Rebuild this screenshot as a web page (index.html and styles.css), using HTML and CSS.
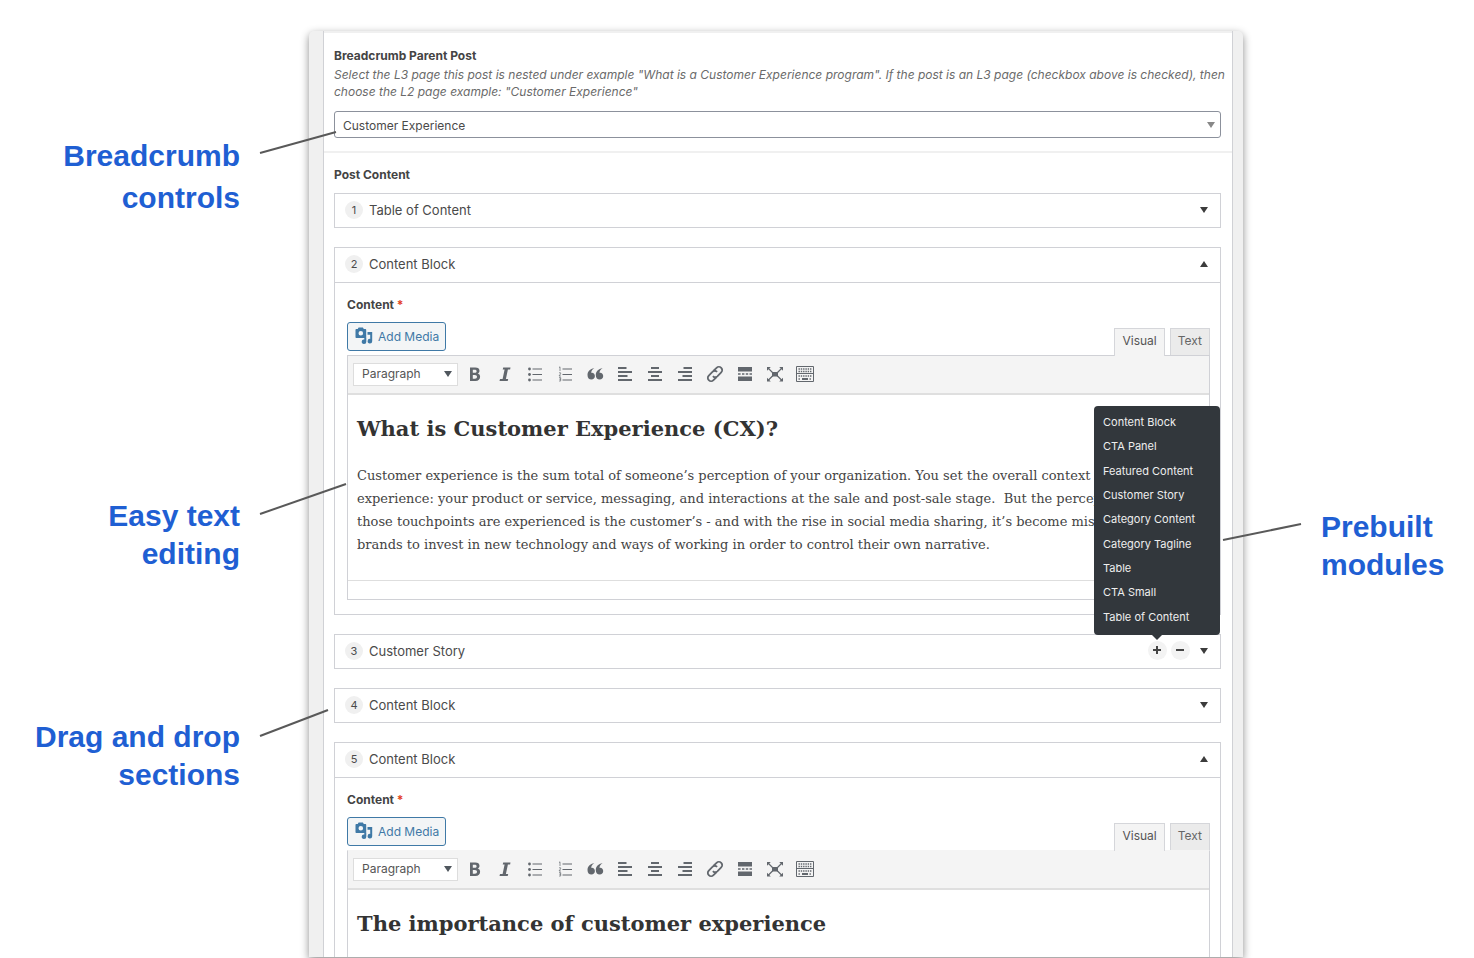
FILE: index.html
```
<!DOCTYPE html>
<html lang="en">

<head>
  <meta charset="UTF-8">
  <title>Post Content</title>
  <link rel="stylesheet" href="styles.css">
</head>

<body>
  <!-- shared icons -->
  <svg class="sprite" width="0" height="0" aria-hidden="true">
    <symbol id="i-media" viewBox="0 0 18 18">
      <path fill-rule="evenodd" d="M1.500 2h1.200L3.600.5h4.300L8.800 2h1.400c.6 0 1 .4 1 1V10c0 .6-.4 1-1 1H1.500c-.6 0-1-.4-1-1V3c0-.6.4-1 1-1zM5.800 4a2.300 2.300 0 1 0 0 4.600 2.300 2.300 0 0 0 0-4.600z" />
      <path d="M12.500 5H17.200v9.200a2.300 2.300 0 1 1-2-2.300V7.700h-2.700zM9.300 10.500h2v4.200a2.300 2.300 0 1 1-2-2.200z" />
    </symbol>
    <symbol id="i-bold" viewBox="0 0 20 20">
      <path fill-rule="evenodd" d="M5 3.500h5.200c2.900 0 4.300 1.200 4.300 3.300 0 1.300-.7 2.400-1.900 2.800 1.500.3 2.500 1.500 2.500 3.200 0 2.600-1.700 4.200-4.700 4.200H5zm2.800 2.200v3h1.900c1.200 0 1.900-.5 1.900-1.500s-.7-1.500-1.900-1.500zm0 5.200v3.800h2.100c1.400 0 2.100-.7 2.100-1.900s-.8-1.900-2.100-1.900z" />
    </symbol>
    <symbol id="i-italic" viewBox="0 0 20 20">
      <path d="M8.200 3.500h7.300l-.4 2.100h-2.200l-2 9.300h2.300l-.5 2.100H4.500l.5-2.100h2.600l2-9.300H7.700z" />
    </symbol>
    <symbol id="i-ul" viewBox="0 0 20 20">
      <path d="M7.500 4.500H17v1.100H7.500zM7.500 10H17v1.100H7.500zM7.500 15.500H17v1.100H7.500z" />
      <circle cx="4.500" cy="5" r="1.400" /><circle cx="4.500" cy="10.500" r="1.400" /><circle cx="4.500" cy="16" r="1.400" />
    </symbol>
    <symbol id="i-ol" viewBox="0 0 20 20">
      <path d="M7.500 4.500H17v1.100H7.500zM7.500 10H17v1.100H7.500zM7.500 15.500H17v1.100H7.500z" />
      <path class="thin" d="M4 3.600l1-.8V7M4 8.800h1.600v1L4 12h2M4 13.600h1.700v1.600H4.600h1.100V17H4" />
    </symbol>
    <symbol id="i-quote" viewBox="0 0 20 20">
      <path d="M9.300 4.200C6.900 5.600 6.200 7.300 6.200 8.800c2-.5 3.700 1 3.700 3.200 0 2-1.500 3.600-3.500 3.600-2.300 0-3.900-1.900-3.900-4.700 0-3.400 2.500-6.300 6.800-6.700zM17.600 4.200c-2.400 1.400-3.100 3.100-3.100 4.600 2-.5 3.700 1 3.700 3.200 0 2-1.500 3.600-3.500 3.600-2.300 0-3.900-1.900-3.900-4.700 0-3.400 2.500-6.300 6.800-6.700z" />
    </symbol>
    <symbol id="i-left" viewBox="0 0 20 20">
      <path d="M3 3h8.500v2H3zM3 7h14v2H3zM3 11h9.500v2H3zM3 15h14v2H3z" />
    </symbol>
    <symbol id="i-center" viewBox="0 0 20 20">
      <path d="M6 3h8v2H6zM3 7h14v2H3zM6 11h8v2H6zM3 15h14v2H3z" />
    </symbol>
    <symbol id="i-right" viewBox="0 0 20 20">
      <path d="M8.500 3H17v2H8.500zM3 7h14v2H3zM7.500 11H17v2H7.500zM3 15h14v2H3z" />
    </symbol>
    <symbol id="i-link" viewBox="0 0 20 20">
      <g class="line" transform="rotate(-45 10 10)">
        <path d="M9 13.300H4.500a3.300 3.300 0 0 1 0-6.600h5.500a3.200 3.200 0 0 1 3 3.300" />
        <path d="M11 6.700h4.500a3.300 3.300 0 0 1 0 6.600H10a3.200 3.200 0 0 1-3-3.300" />
      </g>
    </symbol>
    <symbol id="i-more" viewBox="0 0 20 20">
      <path d="M3 3h14v4.500H3zM3 9.300h2.600v1.500H3zM7 9.300h2.400v1.500H7zM10.800 9.300h2.400v1.500h-2.400zM14.500 9.300H17v1.500h-2.500zM3 12.500h14V17H3z" />
    </symbol>
    <symbol id="i-full" viewBox="0 0 20 20">
      <path d="M7 8h6v4.500H7zM2 3h3.800L2 6.800zM18 3h-3.800L18 6.800zM2 17.500h3.800L2 13.700zM18 17.500h-3.800L18 13.700z" />
      <path class="fine" d="M3 4l5 5M17 4l-5 5M3 16.500l5-5M17 16.500l-5-5" />
    </symbol>
    <symbol id="i-keys" viewBox="0 0 20 20">
      <path class="frame" d="M1.500 2.500h17v15h-17zM2 9.500h16" />
      <path class="dash" d="M3.500 5h13M3.500 7.500h13M3.500 12h13M3.500 15h2M14.500 15h2" />
      <path d="M7 14h6v2H7z" />
    </symbol>
  </svg>

  <div class="page">
    <aside class="notes notes-left">
      <div class="note note-breadcrumb">
        Breadcrumb<br>controls
        <svg class="connector" width="78" height="26"><path d="M1 23L77 2" /></svg>
      </div>
      <div class="note note-editing">
        Easy text<br>editing
        <svg class="connector" width="88" height="32"><path d="M1 31L87 1" /></svg>
      </div>
      <div class="note note-drag">
        Drag and drop<br>sections
        <svg class="connector" width="70" height="28"><path d="M1 27L69 1" /></svg>
      </div>
    </aside>

    <main class="panel">
      <div class="postbox">
        <div class="field">
          <label class="label" for="parent">Breadcrumb Parent Post</label>
          <p class="help">Select the L3 page this post is nested under example "What is a Customer Experience program". If the post is an L3 page (checkbox above is checked), then choose the L2 page example: "Customer Experience"</p>
          <div class="select-wrap parent-wrap">
            <select class="parent" id="parent">
              <option>Customer Experience</option>
            </select>
          </div>
        </div>

        <div class="field content-field">
          <h2 class="label">Post Content</h2>

          <div class="layouts">
            <section class="layout">
              <header class="layout-head">
                <span class="order">1</span>
                <h3 class="layout-title">Table of Content</h3>
                <button class="toggle" type="button" aria-label="Open"></button>
              </header>
            </section>

            <section class="layout open">
              <header class="layout-head">
                <span class="order">2</span>
                <h3 class="layout-title">Content Block</h3>
                <button class="toggle" type="button" aria-label="Close"></button>
              </header>
              <div class="layout-body">
                <div class="label">Content <span class="required">*</span></div>
                <div class="editor-tools">
                  <button class="add-media" type="button"><svg class="media-icon"><use href="#i-media" /></svg>Add Media</button>
                  <div class="tabs">
                    <button class="tab active" type="button">Visual</button>
                    <button class="tab" type="button">Text</button>
                  </div>
                </div>
                <div class="editor">
                  <div class="toolbar">
                    <div class="select-wrap format-wrap">
                      <select class="format" aria-label="Format">
                        <option>Paragraph</option>
                      </select>
                    </div>
                    <button class="tool" type="button" aria-label="Bold"><svg><use href="#i-bold" /></svg></button>
                    <button class="tool" type="button" aria-label="Italic"><svg><use href="#i-italic" /></svg></button>
                    <button class="tool" type="button" aria-label="Bulleted list"><svg><use href="#i-ul" /></svg></button>
                    <button class="tool" type="button" aria-label="Numbered list"><svg><use href="#i-ol" /></svg></button>
                    <button class="tool" type="button" aria-label="Blockquote"><svg><use href="#i-quote" /></svg></button>
                    <button class="tool" type="button" aria-label="Align left"><svg><use href="#i-left" /></svg></button>
                    <button class="tool" type="button" aria-label="Align center"><svg><use href="#i-center" /></svg></button>
                    <button class="tool" type="button" aria-label="Align right"><svg><use href="#i-right" /></svg></button>
                    <button class="tool" type="button" aria-label="Link"><svg><use href="#i-link" /></svg></button>
                    <button class="tool" type="button" aria-label="Read more"><svg><use href="#i-more" /></svg></button>
                    <button class="tool" type="button" aria-label="Fullscreen"><svg><use href="#i-full" /></svg></button>
                    <button class="tool" type="button" aria-label="Toolbar toggle"><svg><use href="#i-keys" /></svg></button>
                  </div>
                  <div class="copy" contenteditable="true" spellcheck="false">
                    <h2>What is Customer Experience (CX)?</h2>
                    <p>Customer experience is the sum total of someone’s perception of your organization. You set the overall context of<br>experience: your product or service, messaging, and interactions at the sale and post-sale stage.&nbsp; But the perception<br>those touchpoints are experienced is the customer’s - and with the rise in social media sharing, it’s become mission<br>brands to invest in new technology and ways of working in order to control their own narrative.</p>
                  </div>
                  <div class="statusbar"></div>
                </div>
              </div>
            </section>

            <section class="layout">
              <header class="layout-head">
                <span class="order">3</span>
                <h3 class="layout-title">Customer Story</h3>
                <div class="add-wrap">
                  <button class="round plus" type="button" aria-label="Add row"></button>
                  <ul class="popup">
                    <li><a href="#">Content Block</a></li>
                    <li><a href="#">CTA Panel</a></li>
                    <li><a href="#">Featured Content</a></li>
                    <li><a href="#">Customer Story</a></li>
                    <li><a href="#">Category Content</a></li>
                    <li><a href="#">Category Tagline</a></li>
                    <li><a href="#">Table</a></li>
                    <li><a href="#">CTA Small</a></li>
                    <li><a href="#">Table of Content</a></li>
                  </ul>
                </div>
                <button class="round minus" type="button" aria-label="Remove row"></button>
                <button class="toggle" type="button" aria-label="Open"></button>
              </header>
            </section>

            <section class="layout">
              <header class="layout-head">
                <span class="order">4</span>
                <h3 class="layout-title">Content Block</h3>
                <button class="toggle" type="button" aria-label="Open"></button>
              </header>
            </section>

            <section class="layout open">
              <header class="layout-head">
                <span class="order">5</span>
                <h3 class="layout-title">Content Block</h3>
                <button class="toggle" type="button" aria-label="Close"></button>
              </header>
              <div class="layout-body">
                <div class="label">Content <span class="required">*</span></div>
                <div class="editor-tools">
                  <button class="add-media" type="button"><svg class="media-icon"><use href="#i-media" /></svg>Add Media</button>
                  <div class="tabs">
                    <button class="tab active" type="button">Visual</button>
                    <button class="tab" type="button">Text</button>
                  </div>
                </div>
                <div class="editor editor-flat">
                  <div class="toolbar">
                    <div class="select-wrap format-wrap">
                      <select class="format" aria-label="Format">
                        <option>Paragraph</option>
                      </select>
                    </div>
                    <button class="tool" type="button" aria-label="Bold"><svg><use href="#i-bold" /></svg></button>
                    <button class="tool" type="button" aria-label="Italic"><svg><use href="#i-italic" /></svg></button>
                    <button class="tool" type="button" aria-label="Bulleted list"><svg><use href="#i-ul" /></svg></button>
                    <button class="tool" type="button" aria-label="Numbered list"><svg><use href="#i-ol" /></svg></button>
                    <button class="tool" type="button" aria-label="Blockquote"><svg><use href="#i-quote" /></svg></button>
                    <button class="tool" type="button" aria-label="Align left"><svg><use href="#i-left" /></svg></button>
                    <button class="tool" type="button" aria-label="Align center"><svg><use href="#i-center" /></svg></button>
                    <button class="tool" type="button" aria-label="Align right"><svg><use href="#i-right" /></svg></button>
                    <button class="tool" type="button" aria-label="Link"><svg><use href="#i-link" /></svg></button>
                    <button class="tool" type="button" aria-label="Read more"><svg><use href="#i-more" /></svg></button>
                    <button class="tool" type="button" aria-label="Fullscreen"><svg><use href="#i-full" /></svg></button>
                    <button class="tool" type="button" aria-label="Toolbar toggle"><svg><use href="#i-keys" /></svg></button>
                  </div>
                  <div class="copy" contenteditable="true" spellcheck="false">
                    <h2>The importance of customer experience</h2>
                  </div>
                </div>
              </div>
            </section>
          </div>
        </div>
      </div>
    </main>

    <aside class="notes notes-right">
      <div class="note note-modules">
        Prebuilt<br>modules
        <svg class="connector" width="80" height="18"><path d="M1 17L79 1" /></svg>
      </div>
    </aside>
  </div>
</body>

</html>
```
FILE: styles.css
```
* {
  box-sizing: border-box;
}

body {
  margin: 0;
  background: #fff;
  color: #4a4a4a;
  font-family: Inter, "Liberation Sans", sans-serif;
  font-size: 12px;
}

h2,
h3,
p,
ul {
  margin: 0;
  padding: 0;
}

button,
select {
  font-family: inherit;
  color: inherit;
  margin: 0;
}

.sprite {
  position: absolute;
}

.page {
  display: grid;
  grid-template-columns: 309px minmax(0, 1fr) 231px;
  height: 100vh;
  overflow: hidden;
}

/* callouts */
.notes {
  position: relative;
  z-index: 2;
  color: #1f5fd3;
  font-family: "Liberation Sans", Arial, sans-serif;
  font-size: 30px;
  font-weight: bold;
  line-height: 38px;
}

.notes-left {
  padding: 135px 69px 0 0;
  text-align: right;
}

.notes-right {
  padding: 508px 0 0 78px;
}

.note {
  position: relative;
}

.note-breadcrumb {
  line-height: 42px;
}

.note-editing {
  margin-top: 278px;
}

.note-drag {
  margin-top: 145px;
}

.connector {
  position: absolute;
  left: calc(100% + 19px);
  fill: none;
  stroke: #595959;
  stroke-width: 2;
}

.note-breadcrumb .connector {
  top: -5px;
}

.note-editing .connector {
  top: -14px;
}

.note-drag .connector {
  top: -9px;
}

.note-modules .connector {
  top: 15px;
  left: auto;
  right: calc(100% + 19px);
}

/* admin panel */
.panel {
  margin: 31px 0 1px;
  padding: 0 10px 0 14px;
  border-radius: 5px 5px 0 0;
  background: #f0f0f0;
  box-shadow: 0 3px 8px rgba(0, 0, 0, 0.45);
  min-height: 0;
}

.postbox {
  height: 100%;
  overflow: hidden;
  border: solid #d0d1d5;
  border-width: 0 1px;
  background: #fff;
}

.field {
  padding: 13px 11px 13px 10px;
  border-top: 2px solid #f0f0f0;
}

.field:first-child {
  padding-top: 14px;
}

.label {
  display: block;
  color: #444;
  font-size: 12px;
  font-weight: 700;
  line-height: 18px;
}

.help {
  margin: 1px -8px 0 0;
  color: #6a6a6a;
  font-size: 12px;
  font-style: italic;
  line-height: 17px;
}

.select-wrap {
  position: relative;
}

.select-wrap::after {
  content: "";
  position: absolute;
  top: 50%;
  right: 6px;
  border: 4px solid transparent;
  border-top: 6px solid #888;
  border-bottom: 0;
  margin-top: -3px;
  pointer-events: none;
}

.parent-wrap {
  margin-top: 11px;
}

.parent {
  display: block;
  width: 100%;
  height: 27px;
  padding: 2px 20px 0 8px;
  border: 1px solid #8c919c;
  border-radius: 3px;
  background: #fff;
  appearance: none;
  font-size: 12px;
}

.layouts {
  display: flex;
  flex-direction: column;
  gap: 19px;
  margin-top: 9px;
}

.layout {
  border: 1px solid #d0d1d6;
  background: #fff;
}

.layout-head {
  display: flex;
  align-items: center;
  height: 33px;
  padding: 0 11px 2px 10px;
}

.open .layout-head {
  height: 35px;
  border-bottom: 1px solid #d0d1d6;
}

.order {
  width: 18px;
  height: 18px;
  margin-right: 6px;
  border-radius: 50%;
  background: #f0f0f0;
  font-size: 11px;
  line-height: 18px;
  text-align: center;
}

.layout-title {
  flex: 1;
  font-size: 13px;
  font-weight: 400;
}

.toggle {
  display: flex;
  align-items: center;
  justify-content: center;
  width: 10px;
  height: 18px;
  padding: 0;
  border: 0;
  background: none;
}

.toggle::before {
  content: "";
  border: 4px solid transparent;
  border-top: 6px solid #3c3c3c;
  border-bottom: 0;
}

.open .toggle::before {
  border-top: 0;
  border-bottom: 6px solid #3c3c3c;
}

.layout-body {
  padding: 13px 10px 14px 12px;
}

.required {
  color: #e2401c;
}

.editor-tools {
  display: flex;
  align-items: flex-end;
  justify-content: space-between;
  margin-top: 8px;
}

.add-media {
  display: flex;
  align-items: center;
  gap: 5px;
  height: 29px;
  margin-bottom: 4px;
  padding: 0 6px 1px 7px;
  border: 1px solid #3f79a6;
  border-radius: 3px;
  background: #f3f5f6;
  color: #3f79a6;
  font-size: 12px;
}

.media-icon {
  width: 18px;
  height: 18px;
  fill: #3f79a6;
}

.tabs {
  display: flex;
  align-items: flex-end;
  gap: 5px;
}

.tab {
  height: 27px;
  padding: 0 7px 4px;
  border: 1px solid #d5d6da;
  border-bottom: 0;
  background: #ebebeb;
  color: #666;
  font-size: 12px;
}

.tab.active {
  position: relative;
  height: 28px;
  margin-bottom: -1px;
  background: #f4f4f4;
  color: #555;
}

.editor {
  border: 1px solid #d0d1d6;
}

.editor-flat {
  border-top-color: #f4f4f4;
}

.toolbar {
  display: flex;
  align-items: center;
  height: 39px;
  padding: 0 5px 1px;
  border-bottom: 2px solid #dfdfdf;
  background: #f4f4f4;
}

.format-wrap {
  margin-right: 2px;
}

.format-wrap::after {
  border-top-color: #50575e;
}

.format {
  display: block;
  width: 105px;
  height: 23px;
  padding: 0 8px 1px;
  border: 1px solid #dddddd;
  border-radius: 0;
  background: #fff;
  appearance: none;
  color: #555;
  font-size: 12px;
}

.tool {
  display: flex;
  align-items: center;
  justify-content: center;
  width: 30px;
  height: 30px;
  padding: 0;
  border: 0;
  background: none;
  color: #62676d;
}

.tool svg {
  width: 20px;
  height: 20px;
  fill: currentColor;
}

.line,
.fine,
.thin,
.frame,
.dash {
  fill: none;
  stroke: currentColor;
}

.line {
  stroke-width: 1.8;
}

.fine {
  stroke-width: 1.2;
}

.thin {
  stroke-width: 0.7;
}

.frame {
  stroke-width: 1;
}

.dash {
  stroke-width: 1.3;
  stroke-dasharray: 1.4 0.9;
}

.copy {
  padding: 18px 9px 0;
  outline: 0;
  color: #444;
  font-family: Georgia, "DejaVu Serif", serif;
}

.editor-flat .copy {
  padding-bottom: 48px;
}

.copy h2 {
  color: #333;
  font-size: 21px;
  line-height: 32px;
}

.copy p {
  margin: 19px 0 24px;
  font-size: 13px;
  line-height: 23px;
  white-space: nowrap;
}

.statusbar {
  height: 19px;
  border-top: 1px solid #dedede;
}

.round {
  position: relative;
  display: block;
  width: 19px;
  height: 19px;
  padding: 0;
  border: 0;
  border-radius: 50%;
  background: #f3f3f3;
}

.minus {
  margin-right: 9px;
}

.round::before,
.plus::after {
  content: "";
  position: absolute;
  top: 8px;
  left: 5px;
  width: 8px;
  height: 2px;
  background: #444;
}

.plus::after {
  transform: rotate(90deg);
}

/* module menu */
.add-wrap {
  position: relative;
  margin-right: 4px;
}

.popup {
  position: absolute;
  right: -53px;
  bottom: 25px;
  z-index: 3;
  display: grid;
  width: 126px;
  height: 229px;
  padding: 4px 0 6px;
  border-radius: 4px;
  background: #32373c;
  list-style: none;
}

.popup::after {
  content: "";
  position: absolute;
  top: 100%;
  left: 58px;
  border: 5px solid transparent;
  border-top-color: #32373c;
  border-bottom: 0;
}

.popup li {
  display: flex;
  align-items: center;
  padding-left: 9px;
}

.popup a {
  color: #eee;
  font-size: 11px;
  text-decoration: none;
}
```
